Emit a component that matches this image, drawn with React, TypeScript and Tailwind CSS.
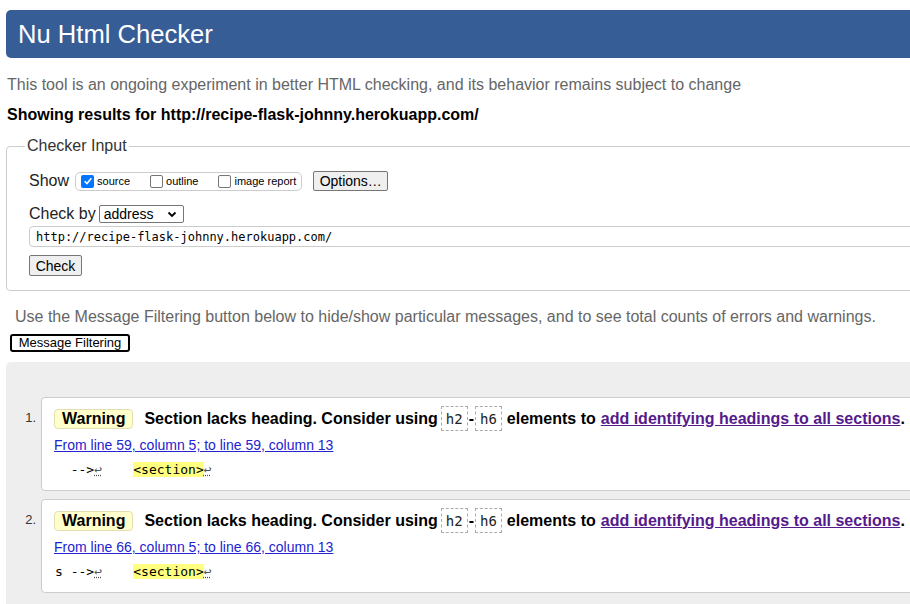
import type { ReactNode } from 'react'

const sans = { fontFamily: '"Liberation Sans", Arial, sans-serif' }

function Box({ checked, label }: { checked?: boolean; label: string }) {
  return (
    <span className="flex items-center gap-[3px]">
      {checked ? (
        <span className="flex h-[13px] w-[13px] items-center justify-center rounded-[2px] bg-[#0075ff]">
          <svg viewBox="0 0 12 12" className="h-[10px] w-[10px]">
            <path d="M2 6.3 L4.8 9 L10 2.8" fill="none" stroke="white" strokeWidth="2" />
          </svg>
        </span>
      ) : (
        <span className="h-[13px] w-[13px] rounded-[2px] border border-[#767676] bg-white" />
      )}
      <span className="text-[11px] leading-[14px] text-black">{label}</span>
    </span>
  )
}

function Btn({ children, className }: { children: ReactNode; className?: string }) {
  return (
    <span
      className={`flex items-center justify-center rounded-[2px] border border-[#767676] bg-[#efefef] text-[14px] leading-[16px] text-black ${className ?? ''}`}
    >
      {children}
    </span>
  )
}

function Code({ children }: { children: ReactNode }) {
  return (
    <span className="flex h-[25px] items-center border border-dashed border-[#aaa] bg-white px-[4px] font-['DejaVu_Sans_Mono',monospace] text-[14px] font-normal text-[#222]">
      {children}
    </span>
  )
}

function Message({ n, prefix }: { n: number; prefix: string }) {
  const line = n === 1 ? 59 : 66
  return (
    <li className="mb-[8px] flex">
      <span className="w-[20px] shrink-0 pt-[13px] pr-[5px] text-right text-[13px] leading-[15px] text-[#333]">
        {n}.
      </span>
      <div className="flex-1 rounded-[4px] border border-[#ccc] bg-white pt-[8px] pb-[12px] pl-[12px]">
        <div className="flex items-center whitespace-nowrap text-[16px] leading-[20px] font-bold text-black">
          <span className="flex h-[20px] items-center rounded-[4px] border border-[#e4dfb0] bg-[#ffffcc] px-[7px]">
            Warning
          </span>
          <span className="ml-[11px]">Section lacks heading. Consider using</span>
          <span className="ml-[3px] flex items-center">
            <Code>h2</Code>
            <span className="px-[1px]">-</span>
            <Code>h6</Code>
          </span>
          <span className="ml-[5px]">elements to</span>
          <span className="ml-[5px] text-[#551a8b] underline">add identifying headings to all sections</span>
          <span>.</span>
        </div>
        <div className="mt-[6px] text-[14px] leading-[16px]">
          <span className="text-[#2323cf] underline">
            From line {line}, column 5; to line {line}, column 13
          </span>
        </div>
        <div className="mt-[9px] whitespace-pre pl-px font-['DejaVu_Sans_Mono',monospace] text-[13px] leading-[16px] text-black">
          {prefix + '-->'}
          <span className="text-[#555] underline decoration-dotted">↩</span>
          {'    '}
          <span className="bg-[#ffff80]">&lt;section&gt;</span>
          <span className="text-[#555] underline decoration-dotted">↩</span>
        </div>
      </div>
    </li>
  )
}

export default function App() {
  return (
    <div className="h-[604px] w-[910px] overflow-hidden bg-white" style={sans}>
      <div className="w-[980px] pt-[10px] pl-[6px]">
        <h1 className="flex h-[48px] items-center rounded-l-[5px] bg-[#365d96] pl-[12px] text-[25.6px] text-white">
          Nu Html Checker
        </h1>
        <p className="mt-[18px] pl-px text-[16px] leading-[18px] text-[#666]">
          This tool is an ongoing experiment in better HTML checking, and its behavior remains subject to change
        </p>
        <p className="mt-[12px] pl-px text-[16px] leading-[18px] font-bold text-black">
          Showing results for http://recipe-flask-johnny.herokuapp.com/
        </p>

        <fieldset className="mt-[13px] rounded-[4px] border border-[#ccc] pr-0 pb-[14px] pl-[22px]">
          <legend className="-ml-[4px] px-[2px] text-[16px] leading-[18px] text-[#333]">Checker Input</legend>
          <div className="mt-[16px] flex items-center text-[16px] leading-[20px] text-[#222]">
            <span>Show</span>
            <span className="ml-[6px] flex h-[19px] items-center gap-[20px] rounded-[5px] border border-[#ccc] px-[5px]">
              <Box checked label="source" />
              <Box label="outline" />
              <Box label="image report" />
            </span>
            <Btn className="ml-[11px] h-[20px] w-[75px]">Options…</Btn>
          </div>
          <div className="mt-[13px] flex items-center text-[16px] leading-[20px] text-[#222]">
            <span>Check by</span>
            <span className="ml-[3px] flex h-[18px] w-[85px] items-center justify-between rounded-[2px] border border-[#767676] bg-white pr-[6px] pl-[4px] text-[14px] text-black">
              address
              <svg viewBox="0 0 10 10" className="h-[10px] w-[10px]">
                <path d="M1.5 3.5 L5 7 L8.5 3.5" fill="none" stroke="black" strokeWidth="1.8" />
              </svg>
            </span>
          </div>
          <div className="mt-[2px] flex h-[21px] items-center rounded-[4px] border border-[#ccc] pl-[6px] font-['DejaVu_Sans_Mono',monospace] text-[12px] text-black">
            http://recipe-flask-johnny.herokuapp.com/
          </div>
          <Btn className="mt-[8px] h-[21px] w-[53px]">Check</Btn>
        </fieldset>

        <p className="mt-[17px] pl-[9px] text-[16px] leading-[18px] text-[#666]">
          Use the Message Filtering button below to hide/show particular messages, and to see total counts of errors and warnings.
        </p>
        <div className="mt-[8px] ml-[4px] flex h-[18px] w-[120px] items-center justify-center rounded-[3px] border-2 border-black bg-white text-[13px] text-black">
          Message Filtering
        </div>

        <div className="mt-[10px] h-[300px] rounded-tl-[5px] bg-[#eeeeee] pt-[35px] pl-[15px]">
          <ol>
            <Message n={1} prefix="  " />
            <Message n={2} prefix="s " />
          </ol>
        </div>
      </div>
    </div>
  )
}
